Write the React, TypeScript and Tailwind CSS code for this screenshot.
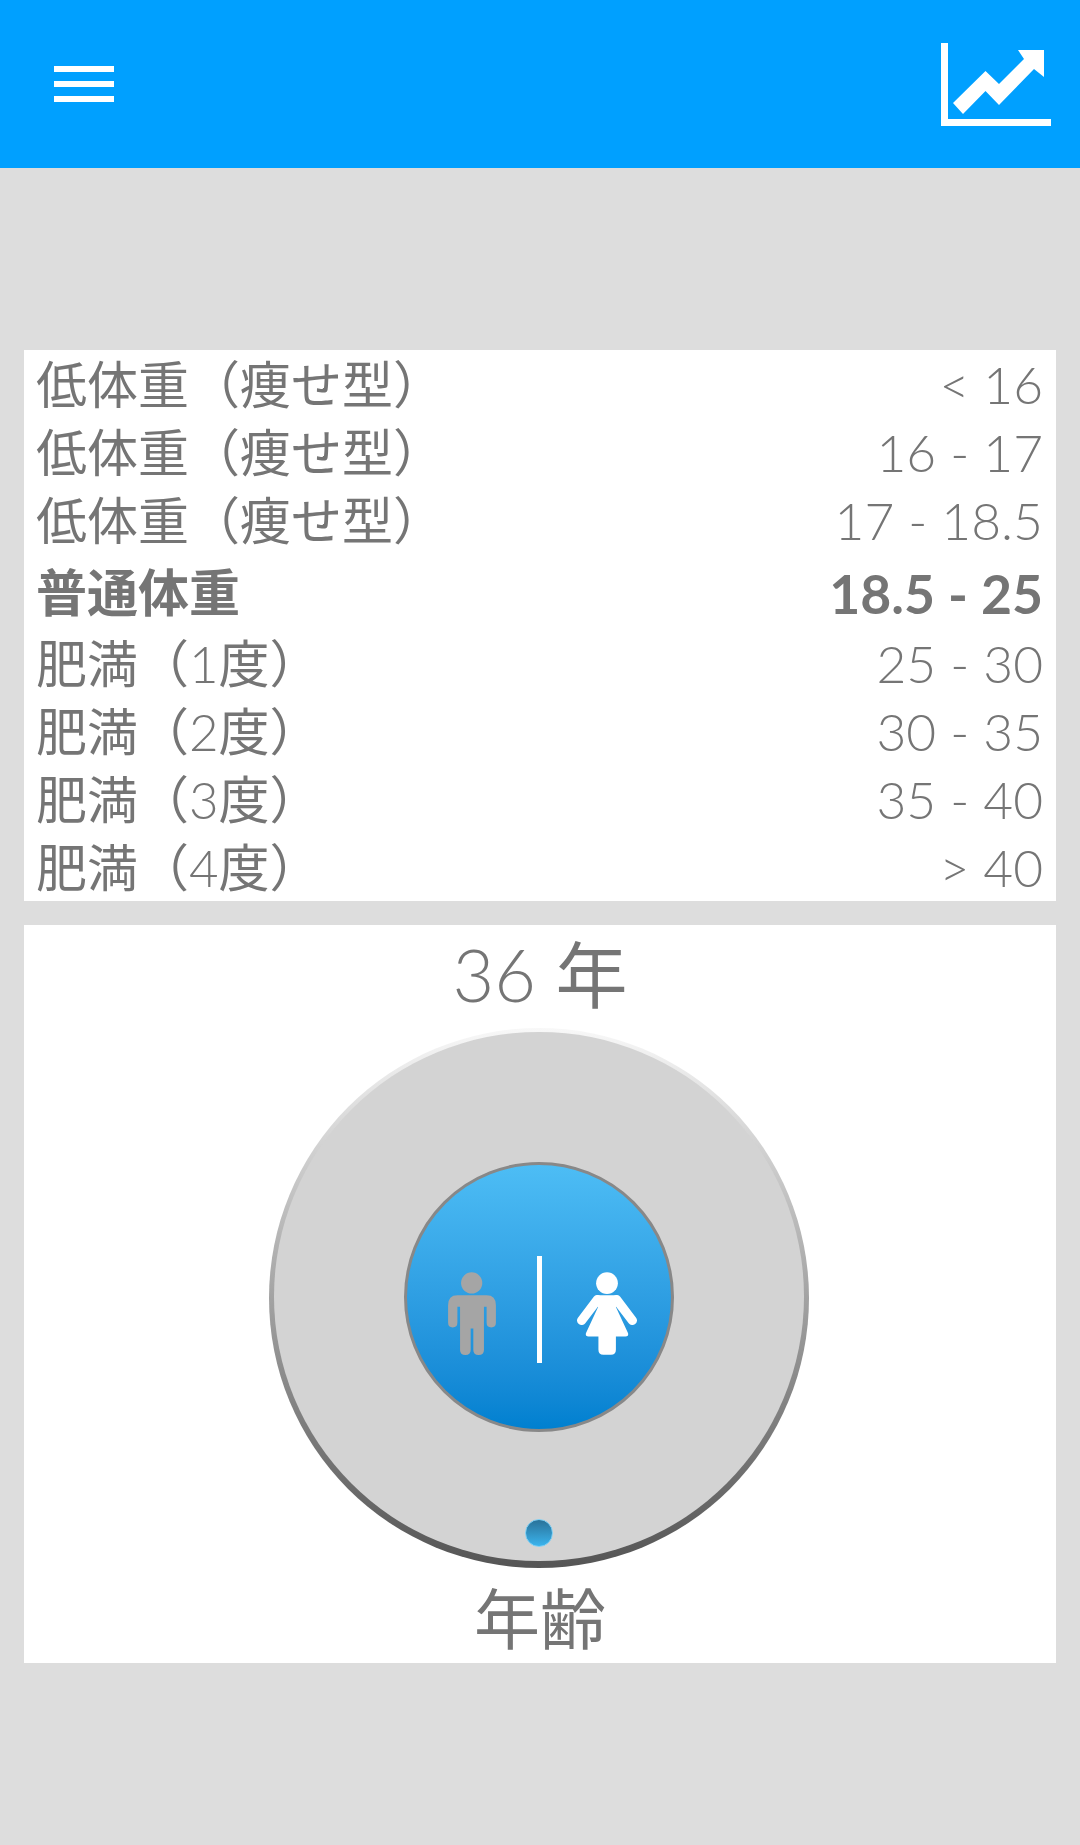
const rows = [
  { label: "低体重（痩せ型）", value: "< 16" },
  { label: "低体重（痩せ型）", value: "16 - 17" },
  { label: "低体重（痩せ型）", value: "17 - 18.5" },
  { label: "普通体重", value: "18.5 - 25", bold: true },
  { label: "肥満（", digit: "1", tail: "度）", value: "25 - 30" },
  { label: "肥満（", digit: "2", tail: "度）", value: "30 - 35" },
  { label: "肥満（", digit: "3", tail: "度）", value: "35 - 40" },
  { label: "肥満（", digit: "4", tail: "度）", value: "> 40" },
];

const ChartIcon = () => (
  <svg width="110" height="83" viewBox="941 42 110 83" fill="#fff">
    <path d="M941 42h7v76h103v7H941z" />
    <path d="M953 102L985.500 70L999 83L1024 58L1018 49H1044V76L1034 68L999 104L985.500 90L963 113Z" />
  </svg>
);

const ManIcon = () => (
  <svg width="48" height="83" viewBox="204 395 144 250" fill="#a5a5a5">
    <circle cx="275" cy="428" r="32" />
    <path d="M232 465H320Q348 465 348 495V548Q348 562 334 562Q320 562 320 548V500H312V630Q312 645 296 645Q280 645 280 630V565H272V630Q272 645 256 645Q240 645 240 630V500H232V548Q232 562 218 562Q204 562 204 548V495Q204 465 232 465Z" />
  </svg>
);

const WomanIcon = () => (
  <svg width="60" height="83" viewBox="590 395 182 250" fill="#fff">
    <circle cx="681" cy="428" r="33" />
    <path d="M650 465H712L716 490L708 500L745 580Q747 590 737 590H708V630Q708 645 693 645H670Q655 645 655 630V590H625Q615 590 617 580L654 500L646 490Z" />
    <path d="M652 478L604 541M710 478L758 541" stroke="#fff" strokeWidth="28" strokeLinecap="round" fill="none" />
  </svg>
);

const App = () => {
  return (
    <div className="min-h-[1845px] w-[1080px] bg-[#dddddd] font-['Lato','Noto_Sans_CJK_JP',sans-serif] text-[#757575]">
      <header className="flex h-[168px] items-center justify-between bg-[#00a0ff] pl-[54px] pr-[29px]">
        <div className="flex w-[60px] flex-col gap-[9px]">
          <div className="h-[6px] bg-white" />
          <div className="h-[6px] bg-white" />
          <div className="h-[6px] bg-white" />
        </div>
        <ChartIcon />
      </header>

      <div className="mx-[24px] mt-[182px] bg-white pr-[13px] pl-[12px]">
        {rows.map((row, i) =>
          row.bold ? (
            <div key={i} className="flex h-[75px] items-center justify-between pt-[3px] font-bold">
              <span className="text-[51px]">{row.label}</span>
              <span className="text-[53.500px]">{row.value}</span>
            </div>
          ) : (
            <div key={i} className="flex h-[68px] items-center justify-between pt-[2px] font-light">
              <span className="text-[51px] font-normal">
                {row.label}
                {row.digit && <span className="font-light">{row.digit}</span>}
                {row.tail}
              </span>
              <span className="text-[51.500px]">{row.value}</span>
            </div>
          ),
        )}
      </div>

      <div className="mx-[24px] mt-[24px] flex h-[738px] flex-col items-center bg-white">
        <div className="h-[103px] shrink-0 text-[72px] leading-[98px] font-light">
          36 <span className="font-normal">年</span>
        </div>
        <div className="relative mr-[2px] flex h-[540px] w-[540px] shrink-0 items-center justify-center rounded-full bg-gradient-to-b from-[#f8f8f8] to-[#555555] px-[5px] pt-[4px] pb-[7px]">
          <div className="flex h-full w-full items-center justify-center rounded-full bg-[#d3d3d3]">
            <div className="flex h-[270px] w-[270px] items-center justify-center rounded-full border-[3px] border-[#888888] bg-gradient-to-b from-[#4dbdf5] to-[#0080d0] pt-[34px] pl-[6px]">
              <ManIcon />
              <div className="mr-[35px] -mt-[9px] ml-[41px] h-[107px] w-[5px] bg-white" />
              <WomanIcon />
            </div>
          </div>
          <div className="absolute bottom-[21px] left-[256px] h-[28px] w-[28px] rounded-full border border-[#7fd0f5] bg-gradient-to-b from-[#2a7299] to-[#3ab4ee]" />
        </div>
        <div className="mt-[6px] text-[66px] leading-[90px] font-normal">年齢</div>
      </div>
    </div>
  );
};

export default App;
